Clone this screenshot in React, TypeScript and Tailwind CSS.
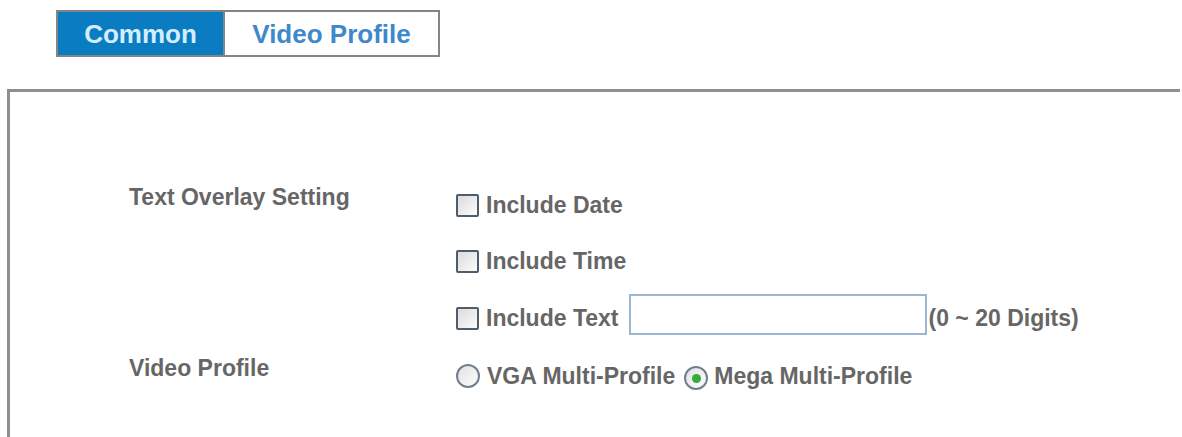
import React from "react";

const font = { fontFamily: '"Liberation Sans", Arial, sans-serif' };

function Checkbox() {
  return (
    <span className="inline-block w-[23px] h-[23px] shrink-0 border-2 border-[#4d5d6e] rounded-[2px] bg-gradient-to-br from-[#dcdcdc] to-[#fbfbfb]" />
  );
}

function Radio({ checked }: { checked?: boolean }) {
  return (
    <span className="inline-flex items-center justify-center w-[24px] h-[24px] shrink-0 rounded-full border-2 border-[#6f7f90] bg-gradient-to-br from-[#e2e2e2] to-[#fdfdfd]">
      {checked && <span className="block w-[9px] h-[9px] rounded-full bg-[#2fae3c]" />}
    </span>
  );
}

export default function App() {
  return (
    <div
      className="w-[1182px] h-[437px] bg-white overflow-hidden text-[23px] font-bold leading-[26px] text-[#666666]"
      style={font}
    >
      <div className="pt-[10px] pl-[56px] flex">
        <div className="flex h-[47px] border-2 border-[#858585]">
          <div className="w-[165px] bg-[#0a7dc2] flex items-center justify-center text-[26px] text-[#d4eeff]">
            Common
          </div>
          <div className="w-[215px] bg-white border-l-2 border-[#858585] flex items-center justify-center text-[26px] text-[#3f88cb]">
            Video Profile
          </div>
        </div>
      </div>

      <div className="mt-[32px] ml-[7px] mr-[2px] h-[400px] border-t-[3px] border-l-[3px] border-[#8f8f8f] pt-[85px] pl-[119px]">
        <div className="grid grid-cols-[327px_1fr]">
          <div className="row-span-3 pt-[7px]">Text Overlay Setting</div>
          <div className="h-[56px] flex items-center gap-[7px]">
            <Checkbox />
            <span>Include Date</span>
          </div>
          <div className="h-[56px] flex items-center gap-[7px]">
            <Checkbox />
            <span>Include Time</span>
          </div>
          <div className="h-[58px] flex items-center">
            <Checkbox />
            <span className="ml-[7px]">Include Text</span>
            <input
              type="text"
              className="ml-[10px] mb-[8px] w-[298px] h-[41px] border-2 border-[#9bb6d3] bg-white outline-none"
            />
            <span className="ml-[2px]">(0 ~ 20 Digits)</span>
          </div>
          <div className="pt-[8px]">Video Profile</div>
          <div className="h-[58px] flex items-center">
            <Radio />
            <span className="ml-[7px]">VGA Multi-Profile</span>
            <span className="ml-[9px]">
              <Radio checked />
            </span>
            <span className="ml-[6px]">Mega Multi-Profile</span>
          </div>
        </div>
      </div>
    </div>
  );
}
